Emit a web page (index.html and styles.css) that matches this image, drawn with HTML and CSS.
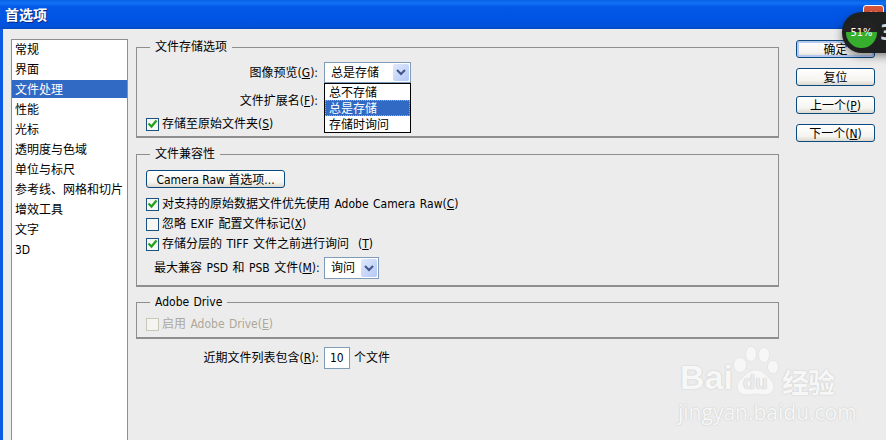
FILE: index.html
```html
<!DOCTYPE html>
<html lang="zh-CN">
<head>
<meta charset="utf-8">
<title>首选项</title>
<link rel="stylesheet" href="styles.css">
</head>
<body>
<div class="window">
  <header class="titlebar"><span class="title">首选项</span><span class="close">✕</span></header>
  <div class="content">
    <ul class="list">
      <li>常规</li><li>界面</li><li class="selected">文件处理</li><li>性能</li><li>光标</li><li>透明度与色域</li><li>单位与标尺</li><li>参考线、网格和切片</li><li>增效工具</li><li>文字</li><li>3D</li>
    </ul>
    <main class="main">
      <fieldset class="group g1">
        <legend>文件存储选项</legend>
        <div class="form-row r-preview">
          <label class="lbl">图像预览(<u>G</u>):</label>
          <div class="select wide"><span>总是存储</span><i class="arrow"><svg width="10" height="7" viewBox="0 0 10 7"><path d="M1 1l4 4 4-4" fill="none" stroke="#3f5688" stroke-width="2"/></svg></i></div>
          <ul class="popup">
            <li>总不存储</li><li class="cur">总是存储</li><li>存储时询问</li>
          </ul>
        </div>
        <div class="form-row r-ext"><label class="lbl">文件扩展名(<u>F</u>):</label></div>
        <div class="check"><i class="box on"><svg width="11" height="10" viewBox="0 0 11 10"><path d="M1.5 4.5l3 3 5-6" fill="none" stroke="#21a121" stroke-width="2.2"/></svg></i>存储至原始文件夹(<u>S</u>)</div>
      </fieldset>
      <fieldset class="group g2">
        <legend>文件兼容性</legend>
        <button class="btn raw" type="button">Camera Raw 首选项...</button>
        <div class="check first"><i class="box on"><svg width="11" height="10" viewBox="0 0 11 10"><path d="M1.5 4.5l3 3 5-6" fill="none" stroke="#21a121" stroke-width="2.2"/></svg></i>对支持的原始数据文件优先使用 Adobe Camera Raw(<u>C</u>)</div>
        <div class="check"><i class="box"></i>忽略 EXIF 配置文件标记(<u>X</u>)</div>
        <div class="check"><i class="box on"><svg width="11" height="10" viewBox="0 0 11 10"><path d="M1.5 4.5l3 3 5-6" fill="none" stroke="#21a121" stroke-width="2.2"/></svg></i>存储分层的 TIFF 文件之前进行询问 &nbsp;(<u>T</u>)</div>
        <div class="compat"><label class="lbl2">最大兼容 PSD 和 PSB 文件(<u>M</u>):</label><div class="select narrow"><span>询问</span><i class="arrow"><svg width="10" height="7" viewBox="0 0 10 7"><path d="M1 1l4 4 4-4" fill="none" stroke="#3f5688" stroke-width="2"/></svg></i></div></div>
      </fieldset>
      <fieldset class="group g3">
        <legend>Adobe Drive</legend>
        <div class="check disabled"><i class="box"></i>启用 Adobe Drive(<u>E</u>)</div>
      </fieldset>
      <div class="recent"><label class="lbl">近期文件列表包含(<u>R</u>):</label><div class="num">10</div><span>个文件</span></div>
    </main>
    <aside class="actions">
      <button class="btn default" type="button">确定</button>
      <button class="btn" type="button">复位</button>
      <button class="btn" type="button">上一个(<u>P</u>)</button>
      <button class="btn" type="button">下一个(<u>N</u>)</button>
    </aside>
  </div>
</div>
<div class="meter">
  <div class="dial"><span>51%</span></div>
  <b class="digit">3</b>
</div>
<div class="watermark">
  <div class="wm-top">
    <span class="bai">Bai</span>
    <div class="paw">
      <svg width="46" height="52" viewBox="0 0 46 52"><g fill="#f7f7f7" stroke="#e2e2e2" stroke-width="0.8"><ellipse cx="7" cy="20" rx="6.5" ry="7.5"/><ellipse cx="18" cy="9" rx="5.5" ry="7.5"/><ellipse cx="31" cy="10" rx="5.5" ry="7.5"/><ellipse cx="40" cy="22" rx="5.5" ry="6.5"/><path d="M23 25c7 0 10 5 15 10 6 6 2 15-6 15-3 0-6-1-9-1s-6 1-10 1c-8 0-12-9-6-15 5-4 8-10 16-10z"/></g></svg>
      <span class="du">du</span>
    </div>
    <span class="jy">经验</span>
  </div>
  <div class="wm-url">jingyan.baidu.com</div>
</div>
</body>
</html>
```
FILE: styles.css
```css
* { box-sizing: border-box; }
html, body { margin: 0; padding: 0; }
body {
  width: 886px; height: 440px; overflow: hidden; position: relative;
  background: #ececec; color: #000;
  font: 12px/14px Tahoma, "DejaVu Sans Condensed", "Noto Sans", "Noto Sans CJK SC", sans-serif;
  word-spacing: 1px;
}
ul { list-style: none; margin: 0; padding: 0; }
u { text-underline-offset: 1px; }
.window { display: flex; flex-direction: column; height: 440px; }
.titlebar {
  height: 29px; flex: none; display: flex; align-items: center; justify-content: space-between;
  padding: 1px 2px 0 5px;
  background: linear-gradient(#0a60e4 0, #0f72f4 3px, #0458e8 7px, #0054e3 20px, #0150d8 27px, #0348b8 29px);
}
.title { color: #fff; font-weight: 700; font-size: 14px; text-shadow: 1px 1px 0 #0a2a80; }
.close {
  width: 21px; height: 21px; border-radius: 3px; border: 1px solid #fff; background: #d9573a;
  color: #fff; font-size: 12px; line-height: 18px; text-align: center;
}
.content {
  flex: 1; display: flex; align-items: flex-start; min-height: 0;
  border-left: 3px solid #0a5ae6; padding: 10px 0 0 8px;
}
.list {
  width: 117px; height: 410px; flex: none; background: #fff; border: 1px solid #8e8e8e;
  display: flex; flex-direction: column; gap: 2px; margin-right: 8px;
}
.list li { height: 18px; line-height: 20px; padding-left: 3px; white-space: nowrap; }
.list .selected { background: #316ac5; color: #fff; }
.main { width: 643px; flex: none; padding-top: 1px; margin-right: 17px; }
.group {
  margin: 0; padding: 0 0 0 9px; border: 2px solid #8e8e8e; border-width: 1px 1px 2px 1px;
  min-width: 0; position: relative;
}
.group legend { margin-left: 4px; padding: 0 5px; line-height: 14px; height: 14px; }
.g1 { height: 98px; }
.g2 { height: 140px; margin-top: 9px; }
.g3 { height: 44px; margin-top: 8px; }
.form-row { position: relative; display: flex; align-items: center; }
.lbl { width: 172px; text-align: right; white-space: nowrap; }
.r-preview { height: 21px; margin-top: 8px; }
.r-preview .select { margin-left: 6px; }
.r-ext { height: 14px; margin-top: 11px; }
.select {
  height: 21px; background: #fff; border: 1px solid #7f9db9; display: flex; align-items: center;
  justify-content: space-between; padding: 1px 1px 1px 6px; flex: none;
}
.select.wide { width: 87px; }
.select.narrow { width: 55px; height: 22px; }
.arrow {
  width: 16px; height: 100%; background: linear-gradient(135deg, #dfe9fd, #b4c8f6); border-radius: 2px;
  display: flex; align-items: center; justify-content: center;
}
.popup {
  position: absolute; left: 178px; top: 21px; width: 87px; height: 50px; z-index: 2;
  background: #fff; border: 1px solid #000;
}
.popup li { height: 16px; line-height: 18px; padding-left: 4px; white-space: nowrap; }
.popup .cur { background: #316ac5; color: #fff; outline: 1px dotted #e7a13a; outline-offset: -1px; }
.check { display: flex; align-items: center; height: 14px; white-space: pre; }
.box {
  width: 13px; height: 13px; flex: none; margin-right: 3px; background: #f6f6f2; border: 1px solid #1c5180;
  display: flex; align-items: center; justify-content: center;
}
.g1 .check { margin-top: 9px; }
.g2 .check { margin-top: 6px; }
.g2 .check.first { margin-top: 9px; }
.g3 .check { margin-top: 8px; }
.disabled { color: #aca899; }
.disabled .box { border-color: #c9c7ba; background: #f4f4f0; }
.btn {
  width: 79px; height: 18px; padding: 2px 0 0; display: block; color: #000; font: inherit; line-height: 14px;
  border: 1px solid #0a4a7e; border-radius: 3px; white-space: nowrap;
  background: linear-gradient(#fff, #f5f4ef 70%, #dcd8ce);
}
.raw { width: 139px; margin-top: 9px; }
.compat { display: flex; align-items: center; margin: 6px 0 0 8px; }
.lbl2 { width: 170px; white-space: nowrap; }
.recent { display: flex; align-items: center; height: 22px; margin-top: 8px; }
.recent .lbl { width: 183px; margin-right: 5px; }
.num {
  width: 26px; height: 22px; background: #fff; border: 1px solid #7f9db9; line-height: 20px; padding-left: 5px;
  margin-right: 4px;
}
.actions { width: 79px; flex: none; display: flex; flex-direction: column; gap: 10px; margin-top: 1px; }
.default { box-shadow: inset 0 0 0 2px #b4c8f0; }
.meter {
  position: absolute; left: 842px; top: 12px; width: 60px; height: 41px; border-radius: 20px 0 0 20px;
  background: #1f2020; box-shadow: 0 3px 8px rgba(0,0,0,.45); z-index: 3;
  display: flex; align-items: center; padding-left: 4px;
}
.dial {
  width: 31px; height: 31px; border-radius: 50%; flex: none; color: #fff; font-size: 11px; text-align: center; line-height: 31px;
  background: linear-gradient(#222 0 50%, #36ad2c 50%);
}
.digit { color: #d8d8d8; font-size: 22px; margin-left: 3px; }
.watermark {
  position: absolute; left: 678px; top: 345px; width: 165px; color: #f7f7f7; word-spacing: 0;
  text-shadow: 0 0 1px #c8c8c8, 0 0 2px #d4d4d4;
}
.wm-top { display: flex; align-items: flex-end; height: 52px; }
.bai { font: 700 34px/36px "Liberation Sans", sans-serif; margin: 0 0 2px 2px; }
.paw { position: relative; width: 46px; height: 52px; margin-left: 0; flex: none; }
.du { position: absolute; left: 10px; top: 26px; font: 700 20px/22px "Liberation Sans", sans-serif; color: #ececec; text-shadow: 0 0 1px #aaa; }
.jy { font: 700 27px/30px "Noto Sans CJK SC", sans-serif; margin: 0 0 0 3px; white-space: nowrap; letter-spacing: -1px; }
.wm-url { font: 21px/22px "Open Sans", sans-serif; margin-top: 4px; white-space: nowrap; }
```
